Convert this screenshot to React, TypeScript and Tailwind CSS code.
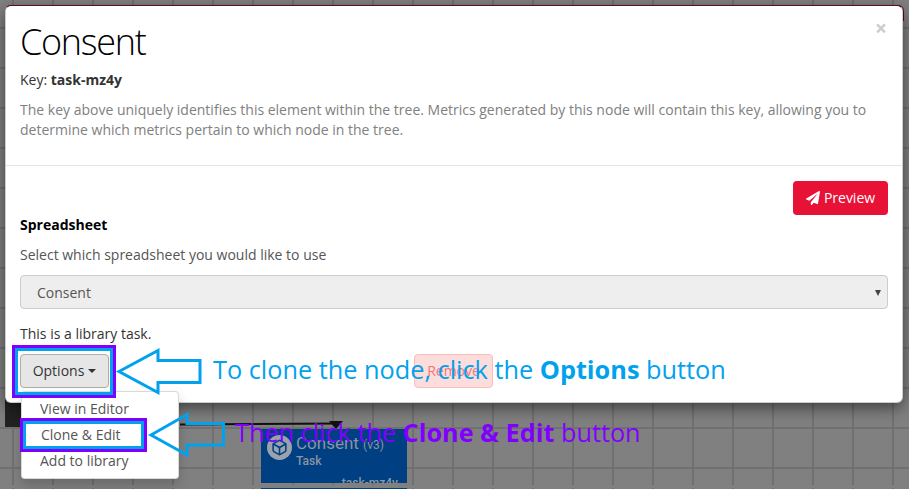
import React from 'react';
import { FaPaperPlane } from 'react-icons/fa';
import { Box } from 'lucide-react';

const openSans = { fontFamily: '"Open Sans", sans-serif' };
const roboto = { fontFamily: 'Roboto, sans-serif' };

function Canvas() {
  return (
    <>
      {/* dark panel edge behind the modal */}
      <div className="absolute left-[5px] top-[5px] w-[899px] h-[16px] bg-[#5c0a20] rounded-t-[6px]" />
      <div className="absolute left-[5px] top-[395px] w-[130px] h-[32px] bg-[#222222]" />
      <div className="absolute left-[180px] top-[423px] w-[158px] h-[2px] bg-[#111111] -rotate-[0.3deg]" />
      <div className="absolute left-[329px] top-[421px] w-0 h-0 border-l-[7px] border-r-[7px] border-t-[8px] border-l-transparent border-r-transparent border-t-[#111111]" />

      {/* task node */}
      <div className="absolute left-[261px] top-[429px] w-[146px] h-[54px] bg-[#003f82] overflow-hidden text-[#8b95a3]" style={roboto}>
        <div className="flex items-start gap-[4px] pl-[6px] pt-[4px]">
          <div className="w-[25px] h-[25px] mt-[2px] rounded-full bg-[#9aa3ad] flex items-center justify-center">
            <Box size={17} className="text-[#003f82]" strokeWidth={2.2} />
          </div>
          <div>
            <div className="text-[17px] leading-[20px]">
              Consent <span className="text-[12px]">(v3)</span>
            </div>
            <div className="text-[12px] leading-[13px] font-medium">Task</div>
          </div>
        </div>
        <div className="absolute right-[9px] top-[47px] text-[12px] leading-[15px] font-medium">task-mz4y</div>
      </div>
      <div className="absolute left-[261px] top-[488px] w-[146px] h-[1px] bg-[#003f82]" />
      <div className="absolute left-0 top-[485px] w-full h-[3px] bg-[#808080]" />
    </>
  );
}

function Modal() {
  return (
    <div className="absolute left-[5px] top-[5px] w-[898px] h-[398px] bg-white border border-black/20 border-t-[#5c0a20] rounded-[6px] shadow-[0_5px_15px_rgba(0,0,0,0.5)] text-[14px] leading-[20px] text-[#333333]">
      <div className="relative h-[160px] border-b border-[#e5e5e5] px-[14px] pt-[11px]">
        <span className="absolute right-[15px] top-[12px] text-[21px] leading-[21px] font-bold text-[#cccccc]">×</span>
        <h1 className="text-[36px] leading-[50px] font-light text-black tracking-[-1.3px]">Consent</h1>
        <p className="mt-[3px]">Key: <b>task-mz4y</b></p>
        <p className="mt-[10px] text-[#808080]">
          The key above uniquely identifies this element within the tree. Metrics generated by this node will contain this key, allowing you to determine which metrics pertain to which node in the tree.
        </p>
      </div>
      <div className="px-[14px] pt-[15px]">
        <div className="flex justify-end">
          <button className="w-[95px] h-[34px] bg-[#e81237] rounded-[4px] text-white flex items-center justify-center gap-[4px]">
            <FaPaperPlane size={14} />
            Preview
          </button>
        </div>
        <p className="font-bold text-black">Spreadsheet</p>
        <p className="mt-[10px] text-[#555555]">Select which spreadsheet you would like to use</p>
        <div className="mt-[10px] h-[34px] bg-[#eeeeee] border border-[#cccccc] rounded-[4px] flex items-center justify-between pl-[16px] pr-[6px] pt-[2px] text-[#555555]">
          <span>Consent</span>
          <span className="w-0 h-0 border-l-[3px] border-r-[3px] border-t-[6px] border-l-transparent border-r-transparent border-t-[#444444]" />
        </div>
        <p className="mt-[15px]">This is a library task.</p>
        <div className="mt-[10px] flex">
          <button className="w-[89px] h-[34px] bg-[#e6e6e6] border border-[#adadad] rounded-[4px] flex items-center justify-center gap-[4px]">
            Options
            <span className="w-0 h-0 border-l-[4px] border-r-[4px] border-t-[4px] border-l-transparent border-r-transparent border-t-[#333333]" />
          </button>
          <button className="ml-[305px] w-[79px] h-[34px] bg-[#fddcdc] border border-[#fbbcbc] rounded-[4px] text-[#e9797a]">Remove</button>
        </div>
      </div>
    </div>
  );
}

function Dropdown() {
  return (
    <ul className="absolute left-[21px] top-[391px] w-[158px] h-[88px] pt-[4px] bg-white border border-black/15 rounded-[4px] shadow-[0_6px_12px_rgba(0,0,0,0.175)] text-[14px] leading-[26px] text-[#555555]">
      <li className="pl-[18px]">View in Editor</li>
      <li className="pl-[19px]">Clone &amp; Edit</li>
      <li className="pl-[18px]">Add to library</li>
    </ul>
  );
}

function Annotations() {
  return (
    <>
      <div className="absolute left-[12px] top-[345px] w-[104px] h-[53px] border-[3px] border-[#8000ff]">
        <div className="w-full h-full border-[3px] border-[#00a2ed]" />
      </div>
      <div className="absolute left-[20px] top-[418px] w-[127px] h-[34px] border-[3px] border-[#8000ff]">
        <div className="w-full h-full border-[3px] border-[#00a2ed]" />
      </div>
      <svg className="absolute left-0 top-0" width="909" height="489" fill="none" stroke="#00a2ed" strokeWidth="3">
        <path d="M119 371.5 L158 350.5 V360.5 H200 V382.5 H158 V392.5 Z" />
        <path d="M151 435 L187 414.5 V423.5 H223.5 V445 H187 V455 Z" />
      </svg>
      <div className="absolute left-[213px] top-[351px] text-[25.3px] leading-[36px] whitespace-nowrap text-[#00a2ed]">
        To clone the node, click the <b>Options</b> button
      </div>
      <div className="absolute left-[235px] top-[414px] text-[25.25px] leading-[36px] whitespace-nowrap text-[#8000ff]">
        Then click the <b>Clone &amp; Edit</b> button
      </div>
    </>
  );
}

function App() {
  return (
    <div
      className="relative w-[909px] h-[489px] overflow-hidden bg-[#808080] bg-[linear-gradient(to_right,#707070_2px,transparent_2px),linear-gradient(to_bottom,#707070_2px,transparent_2px)] bg-[size:40px_40px] bg-[position:12px_27px]"
      style={openSans}
    >
      <Canvas />
      <Modal />
      <Dropdown />
      <Annotations />
    </div>
  );
}

export default App;
